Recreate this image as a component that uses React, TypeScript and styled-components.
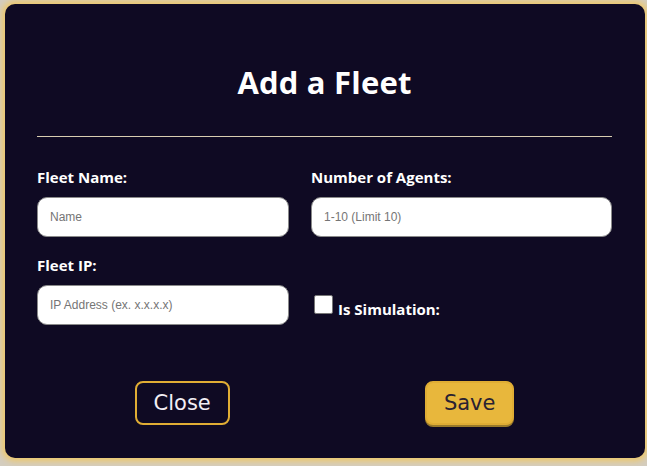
import React, { useState } from "react";
import styled, { createGlobalStyle } from "styled-components";

const GlobalStyle = createGlobalStyle`
  html, body {
    margin: 0;
    padding: 0;
    background: #d4cdbf;
  }
  * {
    box-sizing: border-box;
  }
`;

function App() {
  const [name, setName] = useState("");
  const [agents, setAgents] = useState("");
  const [ip, setIp] = useState("");
  const [sim, setSim] = useState(false);

  return (
    <Page>
      <GlobalStyle />
      <Modal>
        <Title>Add a Fleet</Title>
        <Divider />
        <Form>
          <Field>
            <Label>Fleet Name:</Label>
            <Input
              type="text"
              placeholder="Name"
              value={name}
              onChange={(e) => setName(e.target.value)}
            />
          </Field>
          <Field>
            <Label>Number of Agents:</Label>
            <Input
              type="text"
              placeholder="1-10 (Limit 10)"
              value={agents}
              onChange={(e) => setAgents(e.target.value)}
            />
          </Field>
          <Field>
            <Label>Fleet IP:</Label>
            <Input
              type="text"
              placeholder="IP Address (ex. x.x.x.x)"
              value={ip}
              onChange={(e) => setIp(e.target.value)}
            />
          </Field>
          <CheckRow>
            <Check
              type="checkbox"
              checked={sim}
              onChange={(e) => setSim(e.target.checked)}
            />
            <CheckLabel>Is Simulation:</CheckLabel>
          </CheckRow>
        </Form>
        <Buttons>
          <Button>Close</Button>
          <Button $primary>Save</Button>
        </Buttons>
      </Modal>
    </Page>
  );
}

const Page = styled.div`
  width: 647px;
  height: 466px;
  padding: 4px 2px 8px 5px;
`;

const Modal = styled.div`
  width: 640px;
  height: 454px;
  background: #0f0a23;
  border-radius: 10px;
  box-shadow: 0 0 6px 3px #efc867;
  padding: 0 33px 0 32px;
  display: flex;
  flex-direction: column;
`;

const Title = styled.h1`
  margin: 57px 0 0;
  height: 42px;
  line-height: 42px;
  text-align: center;
  color: #ffffff;
  font-family: "Open Sans", "Noto Sans", sans-serif;
  font-weight: 700;
  font-size: 31px;
  letter-spacing: 0.2px;
`;

const Divider = styled.hr`
  margin: 33px 0 0;
  border: none;
  height: 1px;
  background: #d8cdb0;
`;

const Form = styled.div`
  display: grid;
  grid-template-columns: 252px 301px;
  column-gap: 22px;
  row-gap: 19px;
  margin-top: 31px;
`;

const Field = styled.div`
  display: flex;
  flex-direction: column;
`;

const Label = styled.label`
  color: #ffffff;
  font-family: "Open Sans", "Noto Sans", sans-serif;
  font-weight: 700;
  font-size: 15px;
  line-height: 18px;
  margin-bottom: 11px;
`;

const Input = styled.input`
  height: 40px;
  width: 100%;
  border: 1px solid #8a8a8a;
  border-radius: 10px;
  background: #ffffff;
  padding: 0 12px;
  font-family: "Liberation Sans", Arial, sans-serif;
  font-size: 12px;
  color: #222;
  outline: none;
  &::placeholder {
    color: #757575;
  }
`;

const CheckRow = styled.div`
  display: flex;
  align-items: center;
  align-self: end;
  padding-left: 3px;
  height: 40px;
`;

const Check = styled.input`
  appearance: none;
  width: 19px;
  height: 19px;
  margin: 0 5px 0 0;
  background: #ffffff;
  border: 1px solid #767676;
  border-radius: 2px;
  position: relative;
  top: -1px;
  &:checked::after {
    content: "✓";
    position: absolute;
    left: 3px;
    top: -1px;
    font-size: 14px;
    color: #0f0a23;
  }
`;

const CheckLabel = styled.span`
  color: #ffffff;
  font-family: "Open Sans", "Noto Sans", sans-serif;
  font-weight: 700;
  font-size: 15px;
  line-height: 18px;
  margin-top: 7px;
`;

const Buttons = styled.div`
  display: flex;
  justify-content: space-around;
  margin-top: 56px;
`;

const Button = styled.button<{ $primary?: boolean }>`
  height: 44px;
  padding: 0 17px;
  border-radius: 8px;
  font-family: "DejaVu Sans", "Roboto", sans-serif;
  font-size: 21px;
  cursor: pointer;
  border: 2px solid #e0ad34;
  background: ${(p) => (p.$primary ? "#e8b73c" : "transparent")};
  color: ${(p) => (p.$primary ? "#2a2232" : "#f2eef5")};
  box-shadow: ${(p) => (p.$primary ? "0 2px 0 #9a7a2a" : "none")};
`;

export default App;
